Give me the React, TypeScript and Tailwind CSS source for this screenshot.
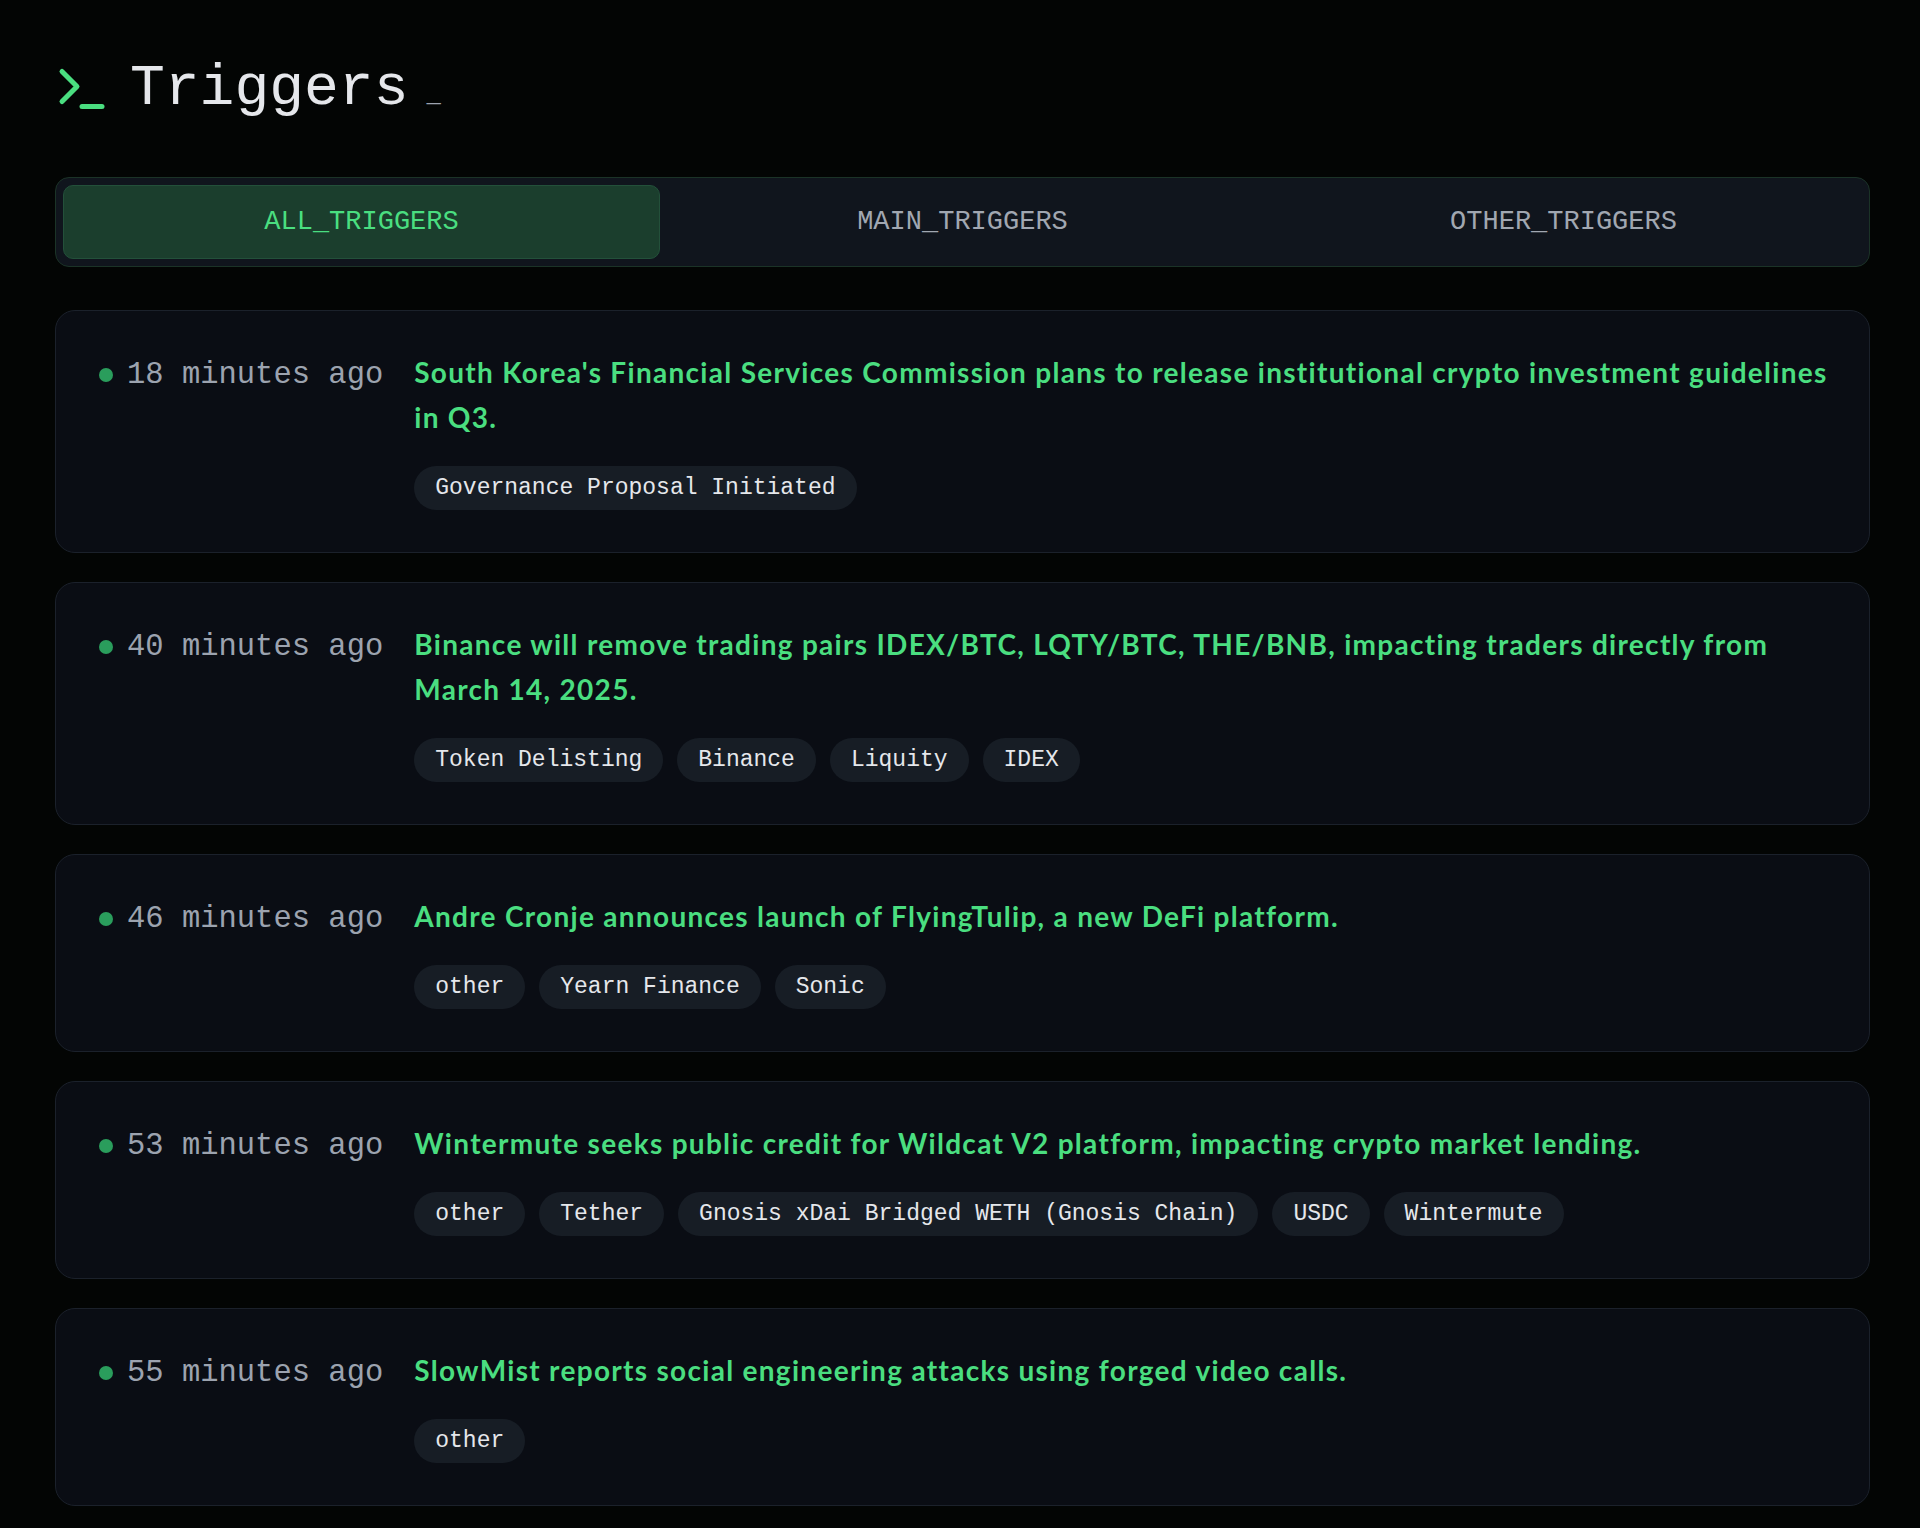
import React from "react";
import { Terminal } from "lucide-react";

type Item = { time: string; title: string; tags: string[] };

const items: Item[] = [
  {
    time: "18 minutes ago",
    title:
      "South Korea's Financial Services Commission plans to release institutional crypto investment guidelines in Q3.",
    tags: ["Governance Proposal Initiated"],
  },
  {
    time: "40 minutes ago",
    title:
      "Binance will remove trading pairs IDEX/BTC, LQTY/BTC, THE/BNB, impacting traders directly from March 14, 2025.",
    tags: ["Token Delisting", "Binance", "Liquity", "IDEX"],
  },
  {
    time: "46 minutes ago",
    title: "Andre Cronje announces launch of FlyingTulip, a new DeFi platform.",
    tags: ["other", "Yearn Finance", "Sonic"],
  },
  {
    time: "53 minutes ago",
    title: "Wintermute seeks public credit for Wildcat V2 platform, impacting crypto market lending.",
    tags: ["other", "Tether", "Gnosis xDai Bridged WETH (Gnosis Chain)", "USDC", "Wintermute"],
  },
  {
    time: "55 minutes ago",
    title: "SlowMist reports social engineering attacks using forged video calls.",
    tags: ["other"],
  },
];

const mono = "font-['Liberation_Mono',monospace]";

export default function App() {
  return (
    <div className="min-h-screen bg-[#030504] pl-[55px] pr-[50px] pt-[59px] pb-[23px]">
      <header className="flex items-center h-[60px]">
        <Terminal size={60} strokeWidth={2} color="#4ade80" className="-ml-[3px]" />
        <h1 className={`${mono} ml-[18px] text-[58px] leading-none text-[#e5e7eb]`}>Triggers</h1>
        <span className={`${mono} ml-[18px] mt-[14px] text-[24px] leading-none text-[#9ca3af]`}>_</span>
      </header>

      <div className="mt-[58px] flex gap-1 rounded-[14px] border border-[#1b3327] bg-[#10151d] p-[7px]">
        <button
          className={`${mono} flex-1 h-[74px] rounded-[10px] border border-[#23503a] bg-[#1b3e2d] text-[27px] text-[#4ade80]`}
        >
          ALL_TRIGGERS
        </button>
        <button
          className={`${mono} flex-1 h-[74px] rounded-[10px] border border-transparent text-[27px] text-[#a1a7b1]`}
        >
          MAIN_TRIGGERS
        </button>
        <button
          className={`${mono} flex-1 h-[74px] rounded-[10px] border border-transparent text-[27px] text-[#a1a7b1]`}
        >
          OTHER_TRIGGERS
        </button>
      </div>

      <div className="mt-[43px] flex flex-col gap-[29px]">
        {items.map((it) => (
          <div
            key={it.time}
            className="rounded-[20px] border border-[#1b212b] bg-[#0a0d14] pl-[43px] pr-[40px] pt-[39px] pb-[42px]"
          >
            <div className="flex items-baseline">
              <div className={`${mono} shrink-0 whitespace-nowrap text-[30.5px] leading-[45px] text-[#9ca3af]`}>
                <span className="mr-[14px] inline-block h-[14px] w-[14px] rounded-full bg-[#2a9d5c] align-middle" />
                {it.time}
              </div>
              <div className="ml-[31px] min-w-0 flex-1">
                <div className="font-['Lato',sans-serif] text-[28px] font-bold leading-[45px] tracking-[1.3px] text-[#4ade80]">
                  {it.title}
                </div>
                <div className="mt-[26px] flex flex-wrap gap-[14px]">
                  {it.tags.map((t) => (
                    <span
                      key={t}
                      className={`${mono} flex h-[44px] items-center rounded-full bg-[#171d25] px-[21px] text-[23px] text-[#e5e7eb]`}
                    >
                      {t}
                    </span>
                  ))}
                </div>
              </div>
            </div>
          </div>
        ))}
      </div>
    </div>
  );
}
